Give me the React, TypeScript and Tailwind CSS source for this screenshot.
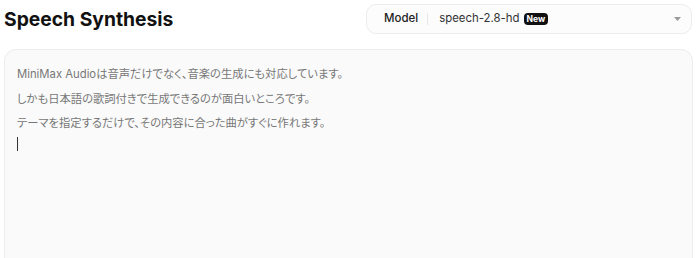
const LINES = [
  'MiniMax Audioは音声だけでなく、音楽の生成にも対応しています。',
  'しかも日本語の歌詞付きで生成できるのが面白いところです。',
  'テーマを指定するだけで、その内容に合った曲がすぐに作れます。',
];

function ModelSelect() {
  return (
    <div className="flex h-[30px] w-[326px] items-center rounded-[10px] border border-[#ececec] bg-[#fcfcfc] pl-[17px] pr-[10px]">
      <span className="text-[11.5px] font-medium text-[#222]">Model</span>
      <span className="ml-[9px] mr-[11px] h-[12px] w-px bg-[#e8e8e8]" />
      <span className="text-[11.4px] text-[#333]">speech-2.8-hd</span>
      <span className="ml-[4px] rounded-[4px] bg-[#111] px-[3px] text-[8.5px] font-bold leading-[12px] text-white">
        New
      </span>
      <svg className="ml-auto" width="7" height="4" viewBox="0 0 7 4">
        <path d="M0 0 L7 0 L3.5 4 Z" fill="#9a9a9a" />
      </svg>
    </div>
  );
}

function App() {
  return (
    <div
      className="h-[258px] w-[700px] overflow-hidden bg-white"
      style={{ fontFamily: 'Inter, "Noto Sans CJK JP", sans-serif' }}
    >
      {/* ヘッダー */}
      <div className="flex h-[38px] items-center justify-between pl-[4px] pr-[8px]">
        <h1 className="text-[19.3px] font-bold text-[#111]">Speech Synthesis</h1>
        <ModelSelect />
      </div>

      {/* テキスト入力 */}
      <div className="ml-[4px] mr-[7px] mt-[11px] h-[260px] rounded-[12px] border border-[#ececec] bg-[#fafafa] px-[12px] pt-[14px]">
        {LINES.map((line) => (
          <p
            key={line}
            className="h-[24.5px] text-[11.3px] leading-[20px] text-[#777]"
            style={{ fontFeatureSettings: '"palt"' }}
          >
            {line}
          </p>
        ))}
        <div className="mt-[-1px] h-[14px] w-px bg-[#333]" />
      </div>
    </div>
  );
}

export default App;
